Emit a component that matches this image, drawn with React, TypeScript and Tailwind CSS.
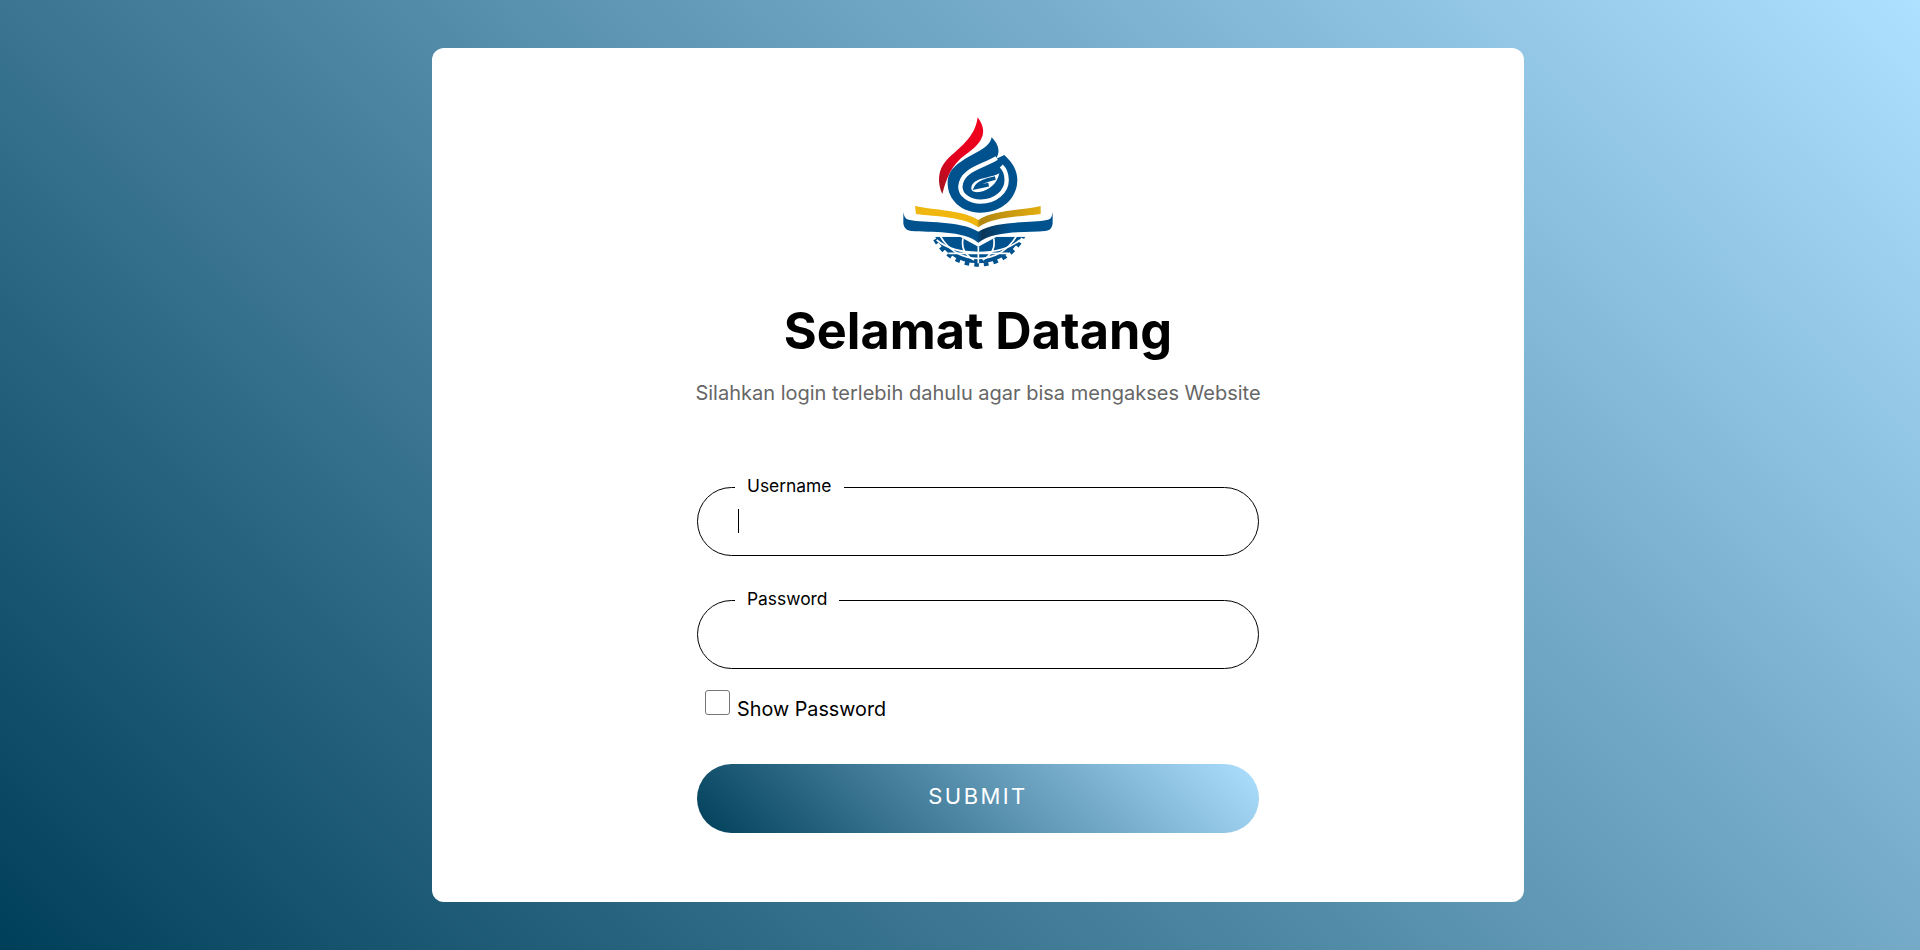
const Logo = () => (
  <svg width="200" height="190" viewBox="0 0 600 570" className="ml-1 block">
    <defs>
      <linearGradient id="flame" x1="0.7" y1="0" x2="0.1" y2="1">
        <stop offset="0" stopColor="#f0001c" />
        <stop offset="0.6" stopColor="#e0001f" />
        <stop offset="1" stopColor="#a5141f" />
      </linearGradient>
      <linearGradient id="gold" x1="0" y1="0" x2="1" y2="0">
        <stop offset="0" stopColor="#efb70f" />
        <stop offset="0.49" stopColor="#efb70f" />
        <stop offset="0.52" stopColor="#b08610" />
        <stop offset="1" stopColor="#e2ad0f" />
      </linearGradient>
      <linearGradient id="book" x1="0" y1="0" x2="1" y2="0">
        <stop offset="0" stopColor="#00528f" />
        <stop offset="0.49" stopColor="#00528f" />
        <stop offset="0.53" stopColor="#0a3558" />
        <stop offset="0.72" stopColor="#00528f" />
      </linearGradient>
      <clipPath id="globe">
        <path d="M130 410H240L295 440L350 410H460V510H130Z" />
      </clipPath>
    </defs>
    {/* flame */}
    <path d="M293 52C322 92 315 125 255 165C215 195 200 232 187 282C172 250 172 210 200 180C235 145 285 115 293 52Z" fill="url(#flame)" />
    {/* drop and spiral */}
    <path d="M335 112C358 135 362 160 346 178L373 165C398 188 412 212 412 240C412 295 365 338 300 338C245 338 203 300 203 250C203 205 240 185 285 160C312 145 330 135 335 112Z" fill="#00528f" />
    <path d="M350 174C310 200 244 208 241 260C241 285 268 305 302 305C347 305 380 275 380 240C380 222 374 208 364 198" fill="none" stroke="#fff" strokeWidth="13" />
    <path d="M358 220C330 236 280 232 274 262C272 274 284 278 298 276C328 272 352 250 358 220Z" fill="#fff" />
    <path d="M346 234C320 240 296 246 288 262L326 254" fill="none" stroke="#00528f" strokeWidth="11" />
    {/* gear and globe */}
    <g clipPath="url(#globe)">
      <circle cx="295" cy="345" r="139" fill="none" stroke="#00528f" strokeWidth="12" />
      <circle cx="295" cy="345" r="149" fill="none" stroke="#00528f" strokeWidth="12" strokeDasharray="14 15" />
      <circle cx="295" cy="345" r="128" fill="#00528f" />
      <path d="M170 420C230 470 360 470 420 420M205 460H385M295 430V490M252 405C240 440 255 465 282 480M338 405C350 440 335 465 308 480" fill="none" stroke="#fff" strokeWidth="5" />
    </g>
    {/* open book */}
    <path d="M105 318C170 332 250 330 295 360C340 330 420 332 482 318V342C420 350 340 350 295 382C250 350 170 350 108 342Z" fill="url(#gold)" />
    <path d="M70 335C72 352 78 358 90 360C130 370 240 360 295 395C350 360 460 370 500 360C512 358 516 352 518 335V370C516 385 510 392 495 393C440 398 340 390 295 428C250 390 150 398 95 393C80 392 72 385 70 370Z" fill="url(#book)" />
  </svg>
);

const Field = ({ label, caret }: { label: string; caret?: boolean }) => (
  <fieldset className="h-[76px] rounded-[35px] border border-black pl-[37px] pr-[37px]">
    <legend className="px-3 pb-[4px] text-[17.4px] leading-[11px] text-black">{label}</legend>
    {caret && <div className="ml-[3px] mt-[14px] h-6 w-px bg-black" />}
  </fieldset>
);

export default function App() {
  return (
    <div
      className="flex h-[950px] w-full items-center justify-center bg-[linear-gradient(45deg,#003f5a,#aee0ff)] pl-[36px]"
      style={{ fontFamily: "Inter, sans-serif" }}
    >
      <div className="flex h-[854px] w-[1092px] flex-col items-center rounded-xl bg-white pt-[52px]">
        <Logo />
        <h1 className="mt-[11px] text-[50.4px] font-bold leading-[60px] text-black">Selamat Datang</h1>
        <p className="mt-[20px] text-[20px] leading-[24px] text-[#666]">
          Silahkan login terlebih dahulu agar bisa mengakses Website
        </p>
        <form className="mt-[75px] flex w-[562px] flex-col">
          <Field label="Username" caret />
          <div className="mt-[37px]">
            <Field label="Password" />
          </div>
          <label className="ml-2 mt-[21px] flex items-start gap-[7px] text-[19.8px] leading-[24px] text-black">
            <span className="h-[25px] w-[25px] rounded-[3px] border border-[#767676] bg-white" />
            <span className="mt-[7px]">Show Password</span>
          </label>
          <button
            type="button"
            className="mt-[43px] h-[69px] w-full rounded-[35px] bg-[linear-gradient(45deg,#003f5a,#aee0ff)] pb-[4px] text-[22px] tracking-[2.4px] text-white"
          >
            SUBMIT
          </button>
        </form>
      </div>
    </div>
  );
}
